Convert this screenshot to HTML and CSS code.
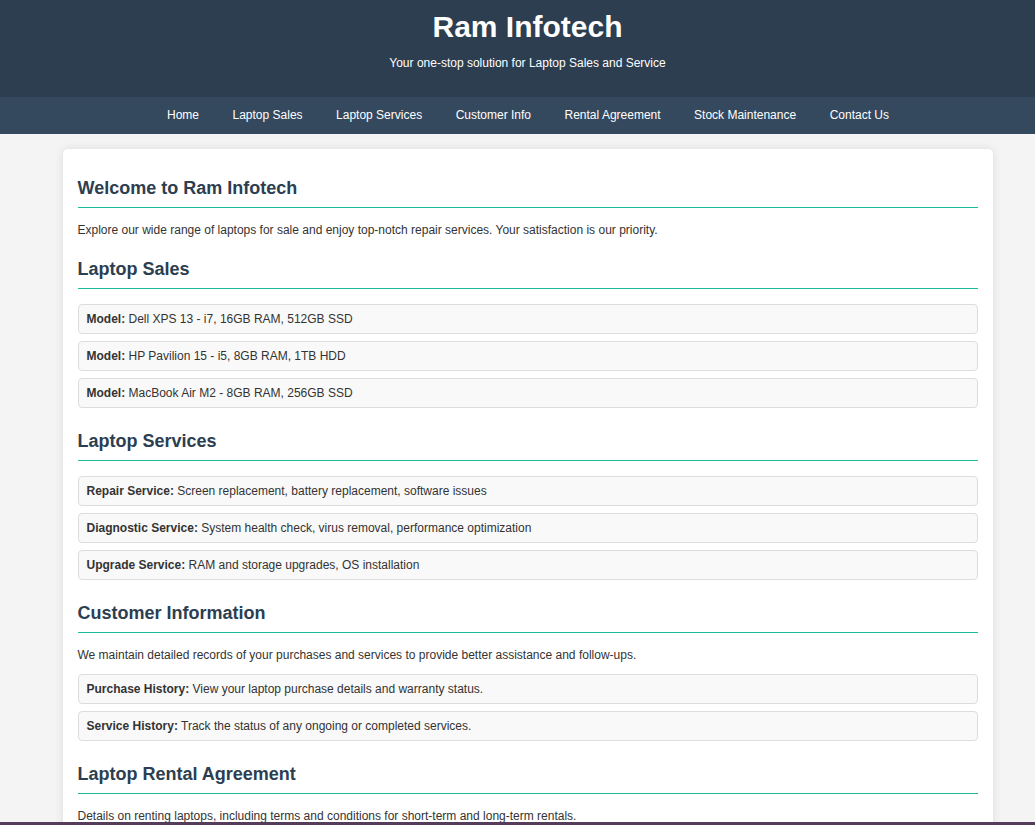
FILE: index.html
```html
<!DOCTYPE html>
<html lang="en">
<head>
<meta charset="UTF-8">
<title>Ram Infotech</title>
<link rel="stylesheet" href="styles.css">
</head>
<body>
<header class="site-header">
  <h1 class="site-title">Ram Infotech</h1>
  <p class="site-tagline">Your one-stop solution for Laptop Sales and Service</p>
</header>
<nav class="site-nav">
  <a href="#home">Home</a>
  <a href="#sales">Laptop Sales</a>
  <a href="#services">Laptop Services</a>
  <a href="#customer">Customer Info</a>
  <a href="#rental">Rental Agreement</a>
  <a href="#stock">Stock Maintenance</a>
  <a href="#contact">Contact Us</a>
</nav>
<main class="page">
  <div class="container">
    <section id="home" class="section">
      <h2 class="section-title">Welcome to Ram Infotech</h2>
      <p class="text">Explore our wide range of laptops for sale and enjoy top-notch repair services. Your satisfaction is our priority.</p>
    </section>
    <section id="sales" class="section">
      <h2 class="section-title">Laptop Sales</h2>
      <div class="item"><strong>Model:</strong> Dell XPS 13 - i7, 16GB RAM, 512GB SSD</div>
      <div class="item"><strong>Model:</strong> HP Pavilion 15 - i5, 8GB RAM, 1TB HDD</div>
      <div class="item"><strong>Model:</strong> MacBook Air M2 - 8GB RAM, 256GB SSD</div>
    </section>
    <section id="services" class="section">
      <h2 class="section-title">Laptop Services</h2>
      <div class="item"><strong>Repair Service:</strong> Screen replacement, battery replacement, software issues</div>
      <div class="item"><strong>Diagnostic Service:</strong> System health check, virus removal, performance optimization</div>
      <div class="item"><strong>Upgrade Service:</strong> RAM and storage upgrades, OS installation</div>
    </section>
    <section id="customer" class="section">
      <h2 class="section-title">Customer Information</h2>
      <p class="text text-gap">We maintain detailed records of your purchases and services to provide better assistance and follow-ups.</p>
      <div class="item"><strong>Purchase History:</strong> View your laptop purchase details and warranty status.</div>
      <div class="item"><strong>Service History:</strong> Track the status of any ongoing or completed services.</div>
    </section>
    <section id="rental" class="section">
      <h2 class="section-title">Laptop Rental Agreement</h2>
      <p class="text text-gap">Details on renting laptops, including terms and conditions for short-term and long-term rentals.</p>
      <div class="item"><strong>Short-Term Rental:</strong> Daily and weekly rental plans available.</div>
      <div class="item"><strong>Long-Term Rental:</strong> Monthly plans with maintenance included.</div>
    </section>
    <section id="stock" class="section">
      <h2 class="section-title">Stock Maintenance</h2>
      <p class="text">We keep our inventory updated with the latest laptop models and accessories.</p>
    </section>
    <section id="contact" class="section">
      <h2 class="section-title">Contact Us</h2>
      <p class="text">Email: info@raminfotech.com | Phone: +91 98765 43210</p>
    </section>
  </div>
</main>
<div class="bottom-strip"></div>
</body>
</html>
```
FILE: styles.css
```css
html, body {
  margin: 0;
  padding: 0;
}
body {
  background: #f4f4f4;
  color: #333;
  font-family: "Liberation Sans", Arial, sans-serif;
  font-size: 12px;
  line-height: 14px;
}
.site-header {
  background: #2c3e50;
  color: #fff;
  text-align: center;
  padding: 10px 0 27px 20px;
  line-height: normal;
}
.site-title {
  margin: 0;
  font-size: 30px;
  font-weight: bold;
}
.site-tagline {
  margin: 12px 0 0;
  font-size: 12px;
}
.site-nav {
  background: #34495e;
  display: flex;
  justify-content: center;
  gap: 33.5px;
  padding: 0 0 0 21px;
}
.site-nav a {
  color: #fff;
  text-decoration: none;
  padding: 11px 0 12px;
  font-size: 12px;
}
.page {
  padding: 0 0 1px 20px;
}
.container {
  max-width: 900px;
  margin: 15px auto;
  padding: 15px;
  background: #fff;
  border-radius: 5px;
  box-shadow: 0 0 10px rgba(0, 0, 0, 0.1);
}
.section-title {
  margin: 22px 0 15px;
  padding: 1px 0 8px;
  border-bottom: 1px solid #1abc9c;
  color: #2c3e50;
  font-size: 18px;
  line-height: 21px;
}
.section:first-child .section-title {
  margin-top: 13px;
}
.text {
  margin: 0;
  padding-top: 1px;
  line-height: 12px;
}
.text-gap {
  margin-bottom: 13px;
}
.item {
  background: #f9f9f9;
  border: 1px solid #ddd;
  border-radius: 4px;
  padding: 7px 8px;
  margin-bottom: 7px;
  line-height: 14px;
}
.bottom-strip {
  position: fixed;
  left: 0;
  right: 0;
  bottom: 0;
  height: 3px;
  background: #553c5a;
}
```
